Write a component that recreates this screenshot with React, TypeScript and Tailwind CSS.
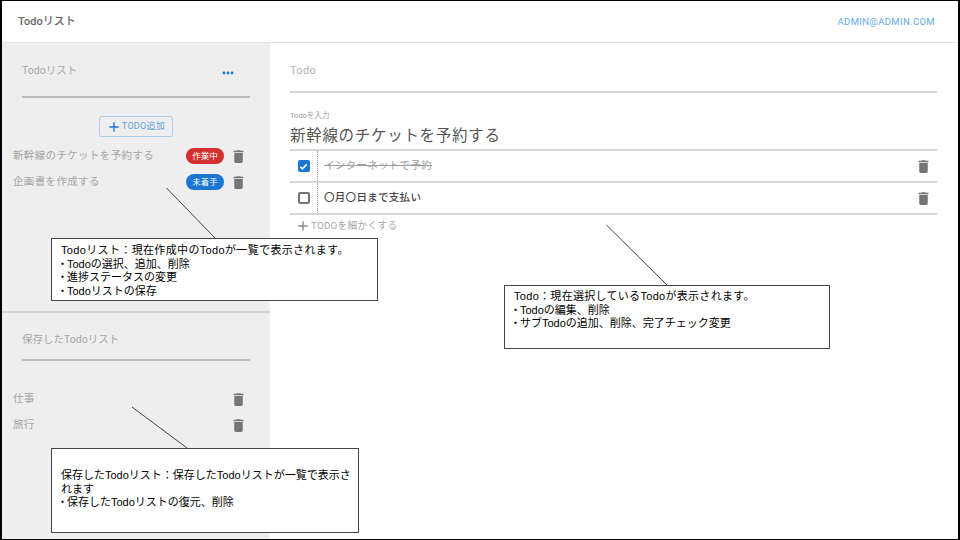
import React from "react";

const FONT = "[font-family:Roboto,'Noto_Sans_CJK_JP',sans-serif]";

function Trash({ className = "" }: { className?: string }) {
  return (
    <svg viewBox="0 0 24 24" className={`w-[17px] h-[17px] fill-[#757575] shrink-0 ${className}`}>
      <path d="M6 19c0 1.1.9 2 2 2h8c1.1 0 2-.9 2-2V7H6v12zM19 4h-3.5l-1-1h-5l-1 1H5v2h14V4z" />
    </svg>
  );
}

function Plus({ className = "" }: { className?: string }) {
  return (
    <svg viewBox="0 0 24 24" className={className}>
      <path d="M19 13h-6v6h-2v-6H5v-2h6V5h2v6h6v2z" />
    </svg>
  );
}

function Row({ label, status, color }: { label: string; status?: string; color?: string }) {
  return (
    <div className="flex items-center h-[26px] pl-[11px] pr-[23px]">
      <span className="flex-1 text-[10.5px] tracking-[0.35px] text-[#a4a4a4]">{label}</span>
      {status && (
        <span className={`w-[38px] h-[16px] rounded-full flex items-center justify-center text-white text-[8.5px] mr-[6px] ${color}`}>
          {status}
        </span>
      )}
      <Trash />
    </div>
  );
}

function SubTodo({ label, done }: { label: string; done?: boolean }) {
  return (
    <div className="flex h-[32px] border-b-2 border-[#d6d6d6] items-center">
      <div className="w-[28px] h-full flex items-center justify-center border-r border-dotted border-[#9a9a9a]">
        {done ? (
          <span className="w-[12px] h-[12px] rounded-[2px] bg-[#1976d2] flex items-center justify-center">
            <svg viewBox="0 0 24 24" className="w-[11px] h-[11px] fill-none stroke-white stroke-[3.5]">
              <path d="M5 12.5l4.5 4.5L19 7.5" />
            </svg>
          </span>
        ) : (
          <span className="w-[12px] h-[12px] rounded-[2px] border-2 border-[#757575]" />
        )}
      </div>
      <span className={`flex-1 pl-[6px] text-[10.5px] tracking-[0.3px] ${done ? "line-through text-[#9e9e9e]" : "font-medium text-[#444]"}`}>
        {label}
      </span>
      <Trash className="mr-[5px]" />
    </div>
  );
}

function Note({ className, children }: { className: string; children: React.ReactNode }) {
  return (
    <div className={`absolute bg-white border border-[#444] text-[11px] leading-[13.6px] text-black whitespace-nowrap [font-family:'Liberation_Sans','Noto_Sans_CJK_JP',sans-serif] ${className}`}>
      {children}
    </div>
  );
}

function Bullet() {
  return <span className="inline-block -ml-[4px] w-[10px]">・</span>;
}

export default function App() {
  return (
    <div className={`relative w-[960px] h-[540px] overflow-hidden bg-white flex flex-col border-t border-b border-l-2 border-r-2 border-black ${FONT}`}>
      <header className="h-[42px] shrink-0 flex items-center justify-between pl-[16px] pr-[23px] pt-[2px] border-b border-[#e4e4e4]">
        <span className="text-[11px] font-medium text-[#666]">Todoリスト</span>
        <span className="text-[9.5px] tracking-[0.35px] text-[#64a8ea]">ADMIN@ADMIN.COM</span>
      </header>

      <div className="flex flex-1 min-h-0">
        <aside className="w-[268px] shrink-0 bg-[#eeeeee] flex flex-col">
          <section className="h-[270px] border-b-2 border-[#d6d6d6]">
            <div className="mx-[20px] h-[55px] border-b-2 border-[#bdbdbd] flex justify-between pt-[20px] pr-[16px] text-[#a6a6a6] text-[10.5px]">
              <span>Todoリスト</span>
              <svg viewBox="0 0 12 4" className="w-[12px] h-[4px] mt-[8px] fill-[#1976d2]">
                <circle cx="2" cy="2" r="1.4" />
                <circle cx="6" cy="2" r="1.4" />
                <circle cx="10" cy="2" r="1.4" />
              </svg>
            </div>
            <div className="flex justify-center pt-[18px] pb-[6px] pr-[1px]">
              <button className="w-[74px] h-[21px] rounded-[3px] border border-[#a9cdf0] flex items-center justify-center text-[9px] tracking-[0.3px] text-[#5e9fdf]">
                <Plus className="w-[16px] h-[16px] fill-[#1976d2]" />
                TODO追加
              </button>
            </div>
            <Row label="新幹線のチケットを予約する" status="作業中" color="bg-[#d32f2f]" />
            <Row label="企画書を作成する" status="未着手" color="bg-[#1976d2]" />
          </section>
          <section className="flex-1">
            <div className="mx-[20px] h-[48px] border-b-2 border-[#bdbdbd] pt-[19px] text-[#a6a6a6] text-[10.5px]">
              保存したTodoリスト
            </div>
            <div className="pt-[25px]">
              <Row label="仕事" />
              <Row label="旅行" />
            </div>
          </section>
        </aside>

        <main className="flex-1 pl-[20px] pr-[21px]">
          <div className="h-[50px] border-b-2 border-[#d6d6d6] pt-[20px] text-[11px] tracking-[0.3px] text-[#b0b0b0]">Todo</div>
          <div className="pt-[18px] text-[7.5px] leading-[10px] text-[#9e9e9e]">Todoを入力</div>
          <div className="h-[30px] text-[15.5px] leading-[24px] tracking-[0.7px] pt-[3px] text-[#555] border-b-2 border-[#d6d6d6]">
            新幹線のチケットを予約する
          </div>
          <SubTodo label="インターネットで予約" done />
          <SubTodo label="〇月〇日まで支払い" />
          <div className="flex items-center pl-[5px] pt-[3px] text-[9.7px] tracking-[0.3px] text-[#a6a6a6]">
            <Plus className="w-[16px] h-[16px] fill-[#8a8a8a]" />
            TODOを細かくする
          </div>
        </main>
      </div>

      <svg className="absolute left-0 top-0 w-[958px] h-[538px] pointer-events-none" viewBox="0 0 958 538">
        <g stroke="#444" strokeWidth="1" fill="none">
          <line x1="164.5" y1="187" x2="213" y2="237" />
          <line x1="130" y1="406" x2="185" y2="447" />
          <line x1="604.5" y1="224" x2="665" y2="284" />
        </g>
      </svg>

      <Note className="left-[49px] top-[237px] w-[327px] h-[63px] pl-[9px] pt-[5px]">
        <p className="tracking-[0.35px]">Todoリスト：現在作成中のTodoが一覧で表示されます。</p>
        <p><Bullet />Todoの選択、追加、削除</p>
        <p><Bullet />進捗ステータスの変更</p>
        <p><Bullet />Todoリストの保存</p>
      </Note>
      <Note className="left-[49px] top-[447px] w-[308px] h-[85px] pl-[9px] pt-[20px]">
        <p>保存したTodoリスト：保存したTodoリストが一覧で表示さ</p>
        <p>れます</p>
        <p><Bullet />保存したTodoリストの復元、削除</p>
      </Note>
      <Note className="left-[502px] top-[284px] w-[326px] h-[64px] pl-[9px] pt-[4px]">
        <p className="tracking-[0.3px]">Todo：現在選択しているTodoが表示されます。</p>
        <p><Bullet />Todoの編集、削除</p>
        <p><Bullet />サブTodoの追加、削除、完了チェック変更</p>
      </Note>
    </div>
  );
}
